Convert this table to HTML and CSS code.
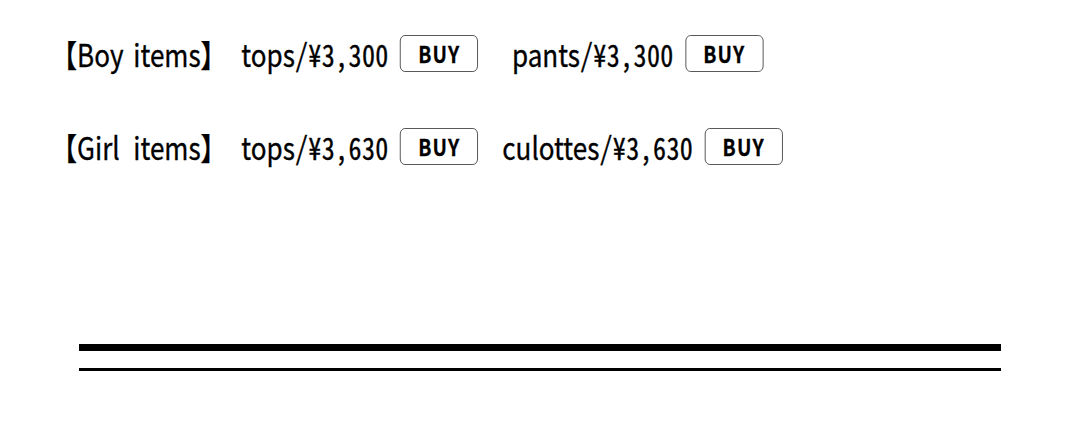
FILE: index.html
```html
<!DOCTYPE html>
<html lang="ja">
<head>
<meta charset="utf-8">
<title>Items</title>
<link rel="stylesheet" href="styles.css">
</head>
<body>
<main class="page">
  <section class="shop">
    <div class="row row-boy">
      <span class="label"><span class="br">【</span><span class="who">Boy</span><span class="kind">items</span><span class="br br-end">】</span></span>
      <span class="item"><span class="name">tops</span><span class="price">/¥3,300</span><button class="buy" type="button">BUY</button></span>
      <span class="item"><span class="name">pants</span><span class="price">/¥3,300</span><button class="buy" type="button">BUY</button></span>
    </div>
    <div class="row row-girl">
      <span class="label"><span class="br">【</span><span class="who">Girl</span><span class="kind">items</span><span class="br br-end">】</span></span>
      <span class="item"><span class="name">tops</span><span class="price">/¥3,630</span><button class="buy" type="button">BUY</button></span>
      <span class="item"><span class="name">culottes</span><span class="price">/¥3,630</span><button class="buy" type="button">BUY</button></span>
    </div>
  </section>
  <div class="rule"></div>
</main>
</body>
</html>
```
FILE: styles.css
```css
html, body {
  margin: 0;
  padding: 0;
  background: #fff;
}

.page {
  width: 1080px;
}

.shop {
  transform: scaleX(0.84);
  transform-origin: 0 0;
  padding: 35px 0 0 60.8px;
  display: flex;
  flex-direction: column;
  gap: 56px;
  font-family: "Noto Sans CJK JP", sans-serif;
  font-size: 31px;
  color: #000;
  -webkit-text-stroke: 0.35px #000;
}

.row {
  display: flex;
  align-items: center;
  height: 37px;
}

.label {
  display: flex;
  align-items: center;
  margin-right: 17.5px;
  line-height: 1;
  white-space: pre;
}

.who {
  width: 66.9px;
}

.item {
  display: flex;
  align-items: center;
  line-height: 1;
  white-space: pre;
}

.price {
  font-family: "Noto Sans Mono CJK JP", "Noto Sans CJK JP", monospace;
  letter-spacing: 0.45px;
}

.buy {
  margin-left: 13.7px;
  width: 93px;
  height: 37px;
  padding: 0;
  border: 1px solid #4a4a4a;
  border-radius: 6px;
  background: #fff;
  color: #000;
  font-family: "Noto Sans CJK JP", sans-serif;
  font-weight: 700;
  font-size: 23px;
  letter-spacing: 1.5px;
  line-height: 1;
  -webkit-text-stroke: 0.3px #000;
}

.row-boy .item + .item {
  margin-left: 40px;
}

.row-girl .item + .item {
  margin-left: 28.6px;
}

.rule {
  margin: 179px 0 0 79px;
  width: 922px;
  height: 17px;
  border-top: 7px solid #000;
  border-bottom: 3px solid #000;
}
```
